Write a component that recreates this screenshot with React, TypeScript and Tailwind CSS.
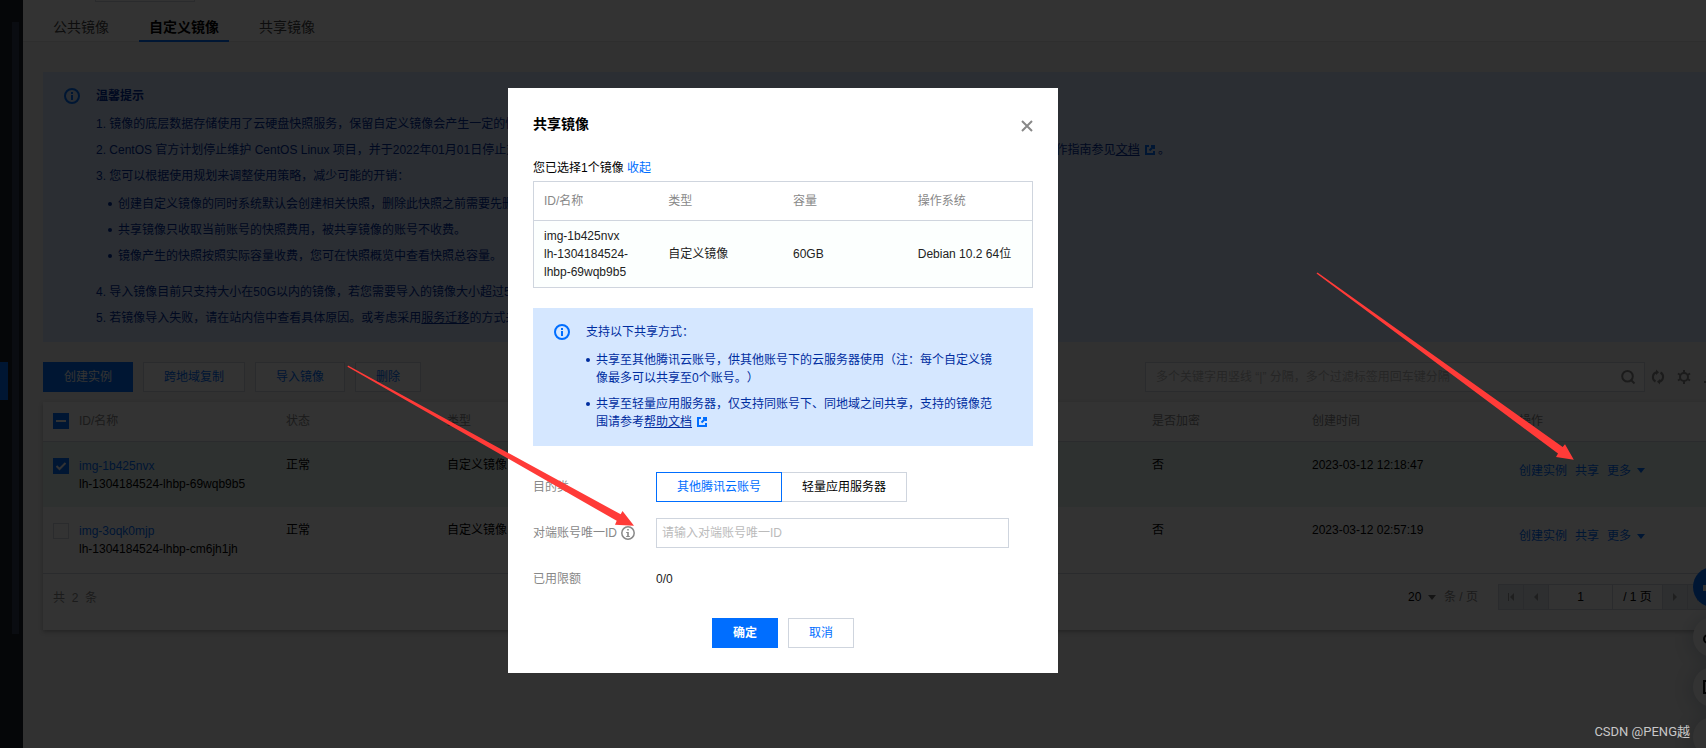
import type { ReactNode } from 'react'

const tabs = ['公共镜像', '自定义镜像', '共享镜像']

const images = [
  { id: 'img-1b425nvx', name: 'lh-1304184524-lhbp-69wqb9b5', created: '2023-03-12 12:18:47', checked: true },
  { id: 'img-3oqk0mjp', name: 'lh-1304184524-lhbp-cm6jh1jh', created: '2023-03-12 02:57:19', checked: false },
]

function InfoIcon({ className }: { className: string }) {
  return (
    <svg viewBox="0 0 16 16" className={className} fill="none" aria-hidden="true">
      <circle cx="8" cy="8" r="7" stroke="currentColor" strokeWidth="2" />
      <path d="M7 4h2v2H7zM7 7h2v5H7z" fill="currentColor" />
    </svg>
  )
}

function ExternalIcon() {
  return (
    <svg viewBox="0 0 10 10" className="ml-[5px] inline-block h-[10px] w-[10px] align-[-1px] text-[#006eff]" fill="none" stroke="currentColor" strokeWidth="2" aria-hidden="true">
      <path d="M4 1H1v8h8V6" />
      <path d="M6 1h3v3M9 1L4.5 5.5" />
    </svg>
  )
}

function Caret({ className }: { className: string }) {
  return (
    <svg viewBox="0 0 8 5" className={className} fill="currentColor" aria-hidden="true">
      <path d="M0 0h8L4 5z" />
    </svg>
  )
}

function Check({ label, checked, mixed }: { label: string; checked?: boolean; mixed?: boolean }) {
  return (
    <label className="relative block h-4 w-4">
      <input
        type="checkbox"
        aria-label={label}
        defaultChecked={checked}
        className="block h-4 w-4 appearance-none border border-[#cfd5de] bg-white checked:border-[#006eff] checked:bg-[#006eff]"
      />
      {checked && (
        <svg viewBox="0 0 16 16" className="absolute inset-0 h-4 w-4" fill="none" stroke="#fff" strokeWidth="2" aria-hidden="true">
          {mixed ? <path d="M3 8h10" /> : <path d="M3.500 8l3 3 6-6" />}
        </svg>
      )}
    </label>
  )
}

function TextLink({ children }: { children: ReactNode }) {
  return (
    <a href="#" className="text-[#006eff]">
      {children}
    </a>
  )
}

function Tips() {
  return (
    <section className="mt-[30px] flex bg-[#d5e7ff] py-[15px] pl-[21px] leading-[18px] text-[#002da0]">
      <InfoIcon className="mt-px h-4 w-4 shrink-0 text-[#006eff]" />
      <div className="ml-4 whitespace-nowrap">
        <h2 className="font-bold">温馨提示</h2>
        <p className="mt-[10px]">1. 镜像的底层数据存储使用了云硬盘快照服务，保留自定义镜像会产生一定的快照费用。</p>
        <p className="mt-2">
          2. CentOS 官方计划停止维护 CentOS Linux 项目，并于2022年01月01日停止对 CentOS 8 的维护，CentOS 7 将于 2024年06月30日停止维护，建议您改使用 TencentOS Server，操作指南参见
          <a href="#" className="underline">文档</a>
          <ExternalIcon /> 。
        </p>
        <p className="mt-2">3. 您可以根据使用规划来调整使用策略，减少可能的开销：</p>
        <ul className="mt-[10px] mb-[18px] space-y-2">
          <TipItem>创建自定义镜像的同时系统默认会创建相关快照，删除此快照之前需要先删除关联的镜像。</TipItem>
          <TipItem>共享镜像只收取当前账号的快照费用，被共享镜像的账号不收费。</TipItem>
          <TipItem>镜像产生的快照按照实际容量收费，您可在快照概览中查看快照总容量。</TipItem>
        </ul>
        <p>4. 导入镜像目前只支持大小在50G以内的镜像，若您需要导入的镜像大小超过50G，请提交工单。</p>
        <p className="mt-2">
          5. 若镜像导入失败，请在站内信中查看具体原因。或考虑采用
          <a href="#" className="underline">服务迁移</a>
          的方式来迁移。
        </p>
      </div>
    </section>
  )
}

function TipItem({ children }: { children: ReactNode }) {
  return (
    <li className="flex items-start pl-3">
      <span className="mt-[7px] mr-[6px] h-1 w-1 shrink-0 rounded-full bg-current" />
      <span>{children}</span>
    </li>
  )
}

function Toolbar() {
  const plain = 'h-[30px] border border-[#cfd5de] bg-white px-5 text-[#006eff]'
  return (
    <div className="mt-5 flex items-center gap-[10px]">
      <button className="h-[30px] border border-[#006eff] bg-[#006eff] px-5 text-white">创建实例</button>
      <button className={plain}>跨地域复制</button>
      <button className={plain}>导入镜像</button>
      <button className={plain}>删除</button>
      <div className="ml-auto flex items-center">
        <label className="flex h-[30px] w-[500px] items-center border border-[#cfd5de] bg-white pr-2 pl-[10px]">
          <input
            type="text"
            aria-label="搜索镜像"
            placeholder="多个关键字用竖线 “|” 分隔，多个过滤标签用回车键分隔"
            className="min-w-0 flex-1 outline-none placeholder:text-[#bbb]"
          />
          <svg viewBox="0 0 16 16" className="h-4 w-4 text-[#888]" fill="none" stroke="currentColor" strokeWidth="2" aria-hidden="true">
            <circle cx="7.500" cy="7.200" r="5.300" />
            <path d="M11 11l3.500 3.500" />
          </svg>
        </label>
        <button aria-label="刷新" className="ml-[5px] text-[#888]">
          <svg viewBox="0 0 16 16" className="h-4 w-4" fill="none" stroke="currentColor" strokeWidth="2">
            <path d="M5.500 12.500A5 5 0 0 1 6.500 3.300M10.500 3.500A5 5 0 0 1 9.500 12.700" />
            <path d="M6 .5L9 3.300 6 6zM10 10L7 12.700l3 2.800z" fill="currentColor" stroke="none" />
          </svg>
        </button>
        <button aria-label="设置" className="ml-[10px] text-[#888]">
          <svg viewBox="0 0 16 16" className="h-4 w-4" fill="none" stroke="currentColor" strokeWidth="2">
            <circle cx="8" cy="8" r="4" />
            <path d="M8 1v3M8 12v3M1.900 4.500l2.600 1.500M11.500 10l2.600 1.500M1.900 11.500L4.500 10M11.500 6l2.600-1.500" />
          </svg>
        </button>
        <button aria-label="下载" className="ml-[10px] text-[#888]">
          <svg viewBox="0 0 16 16" className="h-4 w-4" fill="none" stroke="currentColor" strokeWidth="2">
            <path d="M2 13h12M8 2v8M4.500 6.500L8 10l3.500-3.500" />
          </svg>
        </button>
      </div>
    </div>
  )
}

function ImageTable() {
  return (
    <table className="w-full table-fixed text-left leading-[18px]">
      <colgroup>
        <col className="w-[26px]" />
        <col className="w-[207px]" />
        <col className="w-[161px]" />
        <col className="w-[705px]" />
        <col className="w-[160px]" />
        <col className="w-[207px]" />
        <col />
      </colgroup>
      <thead>
        <tr className="h-[39px] border-b border-[#cfd5de] text-[#888]">
          <th className="pl-[10px]"><Check label="选择全部" checked mixed /></th>
          {['ID/名称', '状态', '类型', '是否加密', '创建时间', '操作'].map((h) => (
            <th key={h} className="px-[10px] font-normal">{h}</th>
          ))}
        </tr>
      </thead>
      <tbody>
        {images.map((img) => (
          <tr key={img.id} className={img.checked ? 'h-[66px] bg-[#e6f5f0] align-top' : 'h-[66px] border-b border-[#cfd5de] align-top'}>
            <td className="pt-4 pl-[10px]"><Check label={img.id} checked={img.checked} /></td>
            <td className="px-[10px] pt-[15px] whitespace-nowrap">
              <TextLink>{img.id}</TextLink>
              <div>{img.name}</div>
            </td>
            <td className="px-[10px] pt-[14px]">正常</td>
            <td className="px-[10px] pt-[14px]">自定义镜像</td>
            <td className="px-[10px] pt-[14px]">否</td>
            <td className="px-[10px] pt-[14px]">{img.created}</td>
            <td className="px-[10px] pt-5">
              <div className="flex items-center gap-2">
                <TextLink>创建实例</TextLink>
                <TextLink>共享</TextLink>
                <button className="flex items-center gap-[6px] text-[#006eff]">
                  更多
                  <Caret className="h-[5px] w-2" />
                </button>
              </div>
            </td>
          </tr>
        ))}
      </tbody>
    </table>
  )
}

function Pager() {
  const cell = 'flex w-[25px] items-center justify-center border-r border-[#cfd5de] bg-[#e3e9f0] text-[#999]'
  return (
    <div className="flex h-14 items-start pt-[10px] pr-[5px] pl-[10px]">
      <span className="leading-[28px] text-[#888]">共&nbsp; 2 &nbsp;条</span>
      <div className="ml-auto flex h-[26px] items-center">
        <label className="relative flex items-center">
          <select aria-label="每页条数" className="w-7 appearance-none leading-[18px] outline-none">
            <option>20</option>
          </select>
          <Caret className="absolute right-0 mt-[2px] h-[5px] w-2 text-[#666]" />
        </label>
        <span className="ml-2 text-[#888]">条 / 页</span>
        <div className="ml-5 flex h-[26px] border border-r-0 border-[#cfd5de]">
          <button aria-label="第一页" className={cell}>
            <svg viewBox="0 0 8 8" className="h-2 w-2" fill="currentColor"><path d="M1 0h1v8H1zM7 0v8L3 4z" /></svg>
          </button>
          <button aria-label="上一页" className={cell}>
            <svg viewBox="0 0 8 8" className="h-2 w-2" fill="currentColor"><path d="M6 0v8L2 4z" /></svg>
          </button>
          <input aria-label="页码" defaultValue="1" className="w-16 border-r border-[#cfd5de] text-center outline-none" />
          <span className="flex w-[50px] items-center justify-center border-r border-[#cfd5de]">/ 1 页</span>
          <button aria-label="下一页" className={cell}>
            <svg viewBox="0 0 8 8" className="h-2 w-2" fill="currentColor"><path d="M2 0v8l4-4z" /></svg>
          </button>
          <button aria-label="最后一页" className={cell}>
            <svg viewBox="0 0 8 8" className="h-2 w-2" fill="currentColor"><path d="M6 0h1v8H6zM1 0v8l4-4z" /></svg>
          </button>
        </div>
      </div>
    </div>
  )
}

// Help buttons stuck to the right edge of the window
function FloatingButtons() {
  const round = 'flex h-10 w-10 items-center justify-center rounded-full bg-white text-[#111] shadow-[0_2px_16px_4px_rgba(60,90,120,0.2)]'
  return (
    <div className="absolute top-[567px] -right-[27px] flex flex-col gap-[10px]">
      <button aria-label="助手" className="flex h-10 w-10 items-center justify-center rounded-full bg-[#006eff] text-white">
        <svg viewBox="0 0 20 20" className="h-5 w-5" fill="currentColor"><path d="M0 8h3V5h14v3h3v6H0z" /></svg>
      </button>
      <button aria-label="咨询" className={round}>
        <svg viewBox="0 0 20 20" className="h-5 w-5" fill="none" stroke="currentColor" strokeWidth="2"><circle cx="5" cy="12" r="4" /><circle cx="15" cy="12" r="4" /></svg>
      </button>
      <button aria-label="反馈" className={round}>
        <svg viewBox="0 0 20 20" className="h-5 w-5" fill="none" stroke="currentColor" strokeWidth="2"><path d="M1 4h18v12H1z" /></svg>
      </button>
      <button aria-label="收起侧栏" className={round} />
    </div>
  )
}

function FormRow({ label, children }: { label: ReactNode; children: ReactNode }) {
  return (
    <div className="flex h-[30px] items-center">
      <div className="flex w-[123px] shrink-0 items-center text-[#888]">{label}</div>
      {children}
    </div>
  )
}

function ShareDialog() {
  return (
    <div role="dialog" aria-label="共享镜像" className="w-[550px] bg-white p-[25px] leading-[18px]">
      <div className="flex h-[22px] items-center justify-between">
        <h1 className="text-[14px] font-bold">共享镜像</h1>
        <button aria-label="关闭" className="mt-1 text-[#888]">
          <svg viewBox="0 0 12 12" className="h-3 w-3" fill="none" stroke="currentColor" strokeWidth="2"><path d="M1 1l10 10M11 1L1 11" /></svg>
        </button>
      </div>

      <p className="mt-6">
        您已选择1个镜像 <TextLink>收起</TextLink>
      </p>
      <table className="mt-1 w-full table-fixed border border-[#cfd5de] text-left">
        <thead>
          <tr className="h-[39px] border-b border-[#cfd5de] text-[#888]">
            {['ID/名称', '类型', '容量', '操作系统'].map((h) => (
              <th key={h} className="px-[10px] font-normal">{h}</th>
            ))}
          </tr>
        </thead>
        <tbody>
          <tr className="bg-[#fcfffe] text-[#222]">
            <td className="px-[10px] py-[6px]">
              img-1b425nvx
              <br />
              lh-1304184524-lhbp-69wqb9b5
            </td>
            <td className="px-[10px]">自定义镜像</td>
            <td className="px-[10px]">60GB</td>
            <td className="px-[10px] whitespace-nowrap">Debian 10.2 64位</td>
          </tr>
        </tbody>
      </table>

      <div className="mt-5 flex bg-[#d5e7ff] py-[15px] pr-8 pl-[21px] text-[#002da0]">
        <InfoIcon className="mt-px h-4 w-4 shrink-0 text-[#006eff]" />
        <div className="ml-4">
          <p>支持以下共享方式：</p>
          <ul className="mt-[10px] -ml-3 space-y-2">
            <TipItem>共享至其他腾讯云账号，供其他账号下的云服务器使用（注：每个自定义镜像最多可以共享至0个账号。）</TipItem>
            <TipItem>
              共享至轻量应用服务器，仅支持同账号下、同地域之间共享，支持的镜像范围请参考
              <a href="#" className="underline">帮助文档</a>
              <ExternalIcon />
            </TipItem>
          </ul>
        </div>
      </div>

      <form className="mt-[26px]" onSubmit={(e) => e.preventDefault()}>
        <div className="space-y-4">
          <FormRow label="目的类">
            <div className="flex" role="radiogroup" aria-label="目的类">
              {['其他腾讯云账号', '轻量应用服务器'].map((name, i) => (
                <label
                  key={name}
                  className="flex h-[30px] items-center border border-[#cfd5de] px-5 not-first:border-l-0 has-checked:border-[#006eff] has-checked:text-[#006eff]"
                >
                  <input type="radio" name="target" defaultChecked={i === 0} className="sr-only" />
                  {name}
                </label>
              ))}
            </div>
          </FormRow>
          <FormRow
            label={
              <>
                <label htmlFor="account">对端账号唯一ID</label>
                <svg viewBox="0 0 14 14" className="ml-1 h-[14px] w-[14px]" fill="none" aria-hidden="true">
                  <circle cx="7" cy="7" r="6.200" stroke="currentColor" strokeWidth="1.500" />
                  <path d="M6.200 3h1.600v1.600H6.200zM5.200 6h2.600v4.500H6.200V7h-1zM5.200 10h3.600v1H5.200z" fill="currentColor" />
                </svg>
              </>
            }
          >
            <input
              id="account"
              type="text"
              placeholder="请输入对端账号唯一ID"
              className="h-[30px] w-[353px] border border-[#cfd5de] px-[5px] outline-none placeholder:text-[#bbb]"
            />
          </FormRow>
          <FormRow label="已用限额">
            <span className="text-[#222]">0/0</span>
          </FormRow>
        </div>
        <div className="mt-6 flex justify-center gap-[10px]">
          <button className="h-[30px] w-[66px] bg-[#006eff] font-bold text-white">确定</button>
          <button type="button" className="h-[30px] w-[66px] border border-[#cfd5de] text-[#006eff]">取消</button>
        </div>
      </form>
    </div>
  )
}

export default function App() {
  return (
    <div className="relative flex h-screen overflow-hidden bg-[#f2f2f2] font-['Liberation_Sans','Noto_Sans_CJK_SC',sans-serif] text-[12px] text-black [text-spacing-trim:space-all]">
      <aside className="flex w-[23px] shrink-0 justify-between bg-[#191e28] pr-1">
        <div className="mt-[362px] h-[38px] w-2 bg-[#006eff]" />
        <div className="mt-[22px] h-[612px] w-[7px] bg-[#323c55]" />
      </aside>

      <main className="min-w-0 flex-1">
        <header className="h-[42px] border-b border-[#e5e5e5] bg-white">
          <div className="ml-[72px] h-[2px] w-[100px] border border-t-0 border-[#cfd5de]" />
          <nav className="flex pl-5 text-[14px]">
            {tabs.map((tab, i) => (
              <a
                key={tab}
                href="#"
                className={
                  i === 1
                    ? 'mx-5 h-10 border-b-2 border-[#006eff] px-[10px] leading-[50px] font-bold'
                    : 'h-10 px-[10px] leading-[50px] text-[#444]'
                }
              >
                {tab}
              </a>
            ))}
          </nav>
        </header>

        {/* The list is slightly wider than the window and runs off its right edge */}
        <div className="-mr-[12px] pl-5">
          <Tips />
          <Toolbar />
          <section className="mt-[10px] bg-white shadow-[0_2px_4px_rgba(0,0,0,0.25)]">
            <ImageTable />
            <Pager />
          </section>
        </div>
      </main>

      <FloatingButtons />

      <div className="absolute inset-0 flex items-start justify-center bg-black/80 pt-[88px] pr-[140px]">
        <ShareDialog />
      </div>

      <svg viewBox="0 0 1706 748" className="pointer-events-none absolute top-0 left-0 h-[748px] w-[1706px] max-w-none" fill="#ff3b38" aria-hidden="true">
        <path d="M348 365.600L620.700 514.300L622.500 511L634 525.800L615 524.800L616.700 520.800L347.500 366.800z" />
        <path d="M1317.500 272.500L1562.700 447L1565 444.300L1573.800 459.800L1556 457L1558 453.600L1316.500 273.500z" />
      </svg>
      <span className="absolute right-4 bottom-[6px] font-['Roboto','Noto_Sans_CJK_SC',sans-serif] text-[13px] leading-5 text-[#c8c8c8]">
        CSDN @PENG越
      </span>
    </div>
  )
}
